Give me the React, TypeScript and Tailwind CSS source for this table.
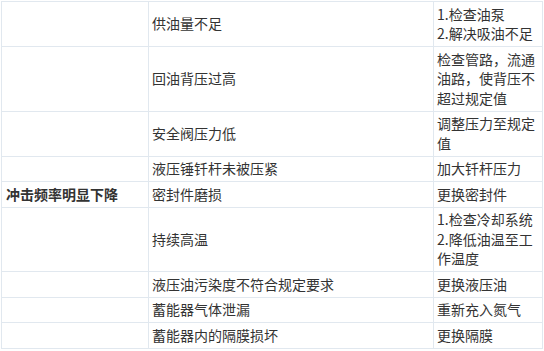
const rows: { cause: string; fix: string[]; group?: string }[] = [
  { cause: "供油量不足", fix: ["1.检查油泵", "2.解决吸油不足"] },
  { cause: "回油背压过高", fix: ["检查管路，流通", "油路，使背压不", "超过规定值"] },
  { cause: "安全阀压力低", fix: ["调整压力至规定", "值"] },
  { cause: "液压锤钎杆未被压紧", fix: ["加大钎杆压力"] },
  { cause: "密封件磨损", fix: ["更换密封件"], group: "冲击频率明显下降" },
  { cause: "持续高温", fix: ["1.检查冷却系统", "2.降低油温至工", "作温度"] },
  { cause: "液压油污染度不符合规定要求", fix: ["更换液压油"] },
  { cause: "蓄能器气体泄漏", fix: ["重新充入氮气"] },
  { cause: "蓄能器内的隔膜损坏", fix: ["更换隔膜"] },
];

export default function App() {
  return (
    <main className="min-h-screen bg-white pl-px pt-px font-['Microsoft_YaHei','Noto_Sans_CJK_SC',sans-serif] text-[14px] leading-[19.5px] text-[#333]">
      <table className="w-[541px] table-fixed border-collapse border border-[#e1e8ef]">
        <colgroup>
          <col className="w-[147px]" />
          <col className="w-[285px]" />
          <col className="w-[109px]" />
        </colgroup>
        <tbody>
          {rows.map((r) => (
            <tr key={r.cause}>
              <td className="border border-[#e1e8ef] px-[4px] py-[2.5px] align-middle font-bold">
                {r.group}
              </td>
              <td className="border border-[#e1e8ef] px-[3px] py-[2.5px] align-middle">
                {r.cause}
              </td>
              <td className="border border-[#e1e8ef] px-[3px] py-[2.5px] align-middle">
                {r.fix.map((line, i) => (
                  <div key={i} className="whitespace-nowrap">
                    {line}
                  </div>
                ))}
              </td>
            </tr>
          ))}
        </tbody>
      </table>
    </main>
  );
}
